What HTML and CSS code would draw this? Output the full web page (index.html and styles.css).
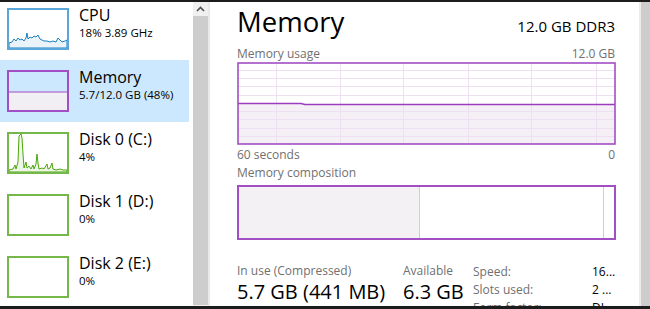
FILE: index.html
```html
<!DOCTYPE html>
<html lang="en">
<head>
    <meta charset="UTF-8">
    <title>Task Manager - Memory</title>
    <link rel="stylesheet" href="styles.css">
</head>
<body>
    <div class="frame">
        <div class="sidebar">
            <div class="list">
                <div class="item">
                    <svg class="thumb cpu" width="62" height="42" viewBox="0 0 62 42">
                        <path d="M2 35 L5 34 L7 31 L9 33 L11 30 L13 32 L15 31 L17 33 L19 30 L20 25 L21 31 L23 29 L25 30 L27 28 L29 29 L31 27 L33 31 L35 32 L37 33 L40 33 L43 34 L46 33 L49 34 L51 30 L53 32 L55 34 L58 33 L60 32 L60 40 L2 40 Z" fill="#eaf3fa" stroke="#1a7fbf" stroke-width="1"/>
                        <rect x="1" y="1" width="60" height="40" fill="none" stroke="#5aa6d9" stroke-width="2"/>
                    </svg>
                    <div class="label">
                        <div class="name">CPU</div>
                        <div class="value">18% 3.89 GHz</div>
                    </div>
                </div>
                <div class="item selected">
                    <svg class="thumb" width="62" height="42" viewBox="0 0 62 42">
                        <rect x="1" y="22" width="60" height="19" fill="#f2eff4"/>
                        <line x1="1" y1="22" x2="61" y2="22" stroke="#a24ec4" stroke-width="1.2"/>
                        <rect x="1" y="1" width="60" height="40" fill="none" stroke="#a24ec4" stroke-width="2"/>
                    </svg>
                    <div class="label">
                        <div class="name">Memory</div>
                        <div class="value">5.7/12.0 GB (48%)</div>
                    </div>
                </div>
                <div class="item">
                    <svg class="thumb" width="62" height="42" viewBox="0 0 62 42">
                        <path d="M2 38 L6 37 L8 33 L9 37 L11 30 L12 4 L14 2 L15 6 L16 22 L17 36 L19 30 L20 36 L22 34 L24 37 L26 33 L27 37 L29 32 L30 22 L31 31 L32 37 L35 36 L37 37 L40 32 L41 37 L43 36 L45 31 L46 37 L49 38 L53 37 L56 38 L60 38 L60 40 L2 40 Z" fill="#eef6e8" stroke="#4da60c" stroke-width="1"/>
                        <rect x="1" y="1" width="60" height="40" fill="none" stroke="#74b84a" stroke-width="2"/>
                    </svg>
                    <div class="label">
                        <div class="name">Disk 0 (C:)</div>
                        <div class="value">4%</div>
                    </div>
                </div>
                <div class="item">
                    <svg class="thumb" width="62" height="42" viewBox="0 0 62 42">
                        <rect x="1" y="1" width="60" height="40" fill="none" stroke="#74b84a" stroke-width="2"/>
                    </svg>
                    <div class="label">
                        <div class="name">Disk 1 (D:)</div>
                        <div class="value">0%</div>
                    </div>
                </div>
                <div class="item">
                    <svg class="thumb" width="62" height="42" viewBox="0 0 62 42">
                        <rect x="1" y="1" width="60" height="40" fill="none" stroke="#74b84a" stroke-width="2"/>
                    </svg>
                    <div class="label">
                        <div class="name">Disk 2 (E:)</div>
                        <div class="value">0%</div>
                    </div>
                </div>
            </div>
        </div>
        <div class="scrollbar">
            <div class="arrow">
                <svg width="9" height="6" viewBox="0 0 9 6"><path d="M1 5 L4.5 1.5 L8 5" fill="none" stroke="#505050" stroke-width="1.6"/></svg>
            </div>
            <div class="track"></div>
        </div>
        <div class="splitter"></div>

        <div class="main">
            <div class="header">
                <div class="title">Memory</div>
                <div class="spec">12.0 GB DDR3</div>
            </div>

            <div class="caption">
                <span>Memory usage</span>
                <span>12.0 GB</span>
            </div>
            <svg class="graph" width="379" height="83" viewBox="0 0 379 83">
                <rect x="1" y="42" width="377" height="40" fill="#f4f0f5"/>
                <g stroke="#eee0f3" stroke-width="1">
                    <line x1="1" y1="8.5" x2="378" y2="8.5"/>
                    <line x1="1" y1="16.5" x2="378" y2="16.5"/>
                    <line x1="1" y1="24.5" x2="378" y2="24.5"/>
                    <line x1="1" y1="33.5" x2="378" y2="33.5"/>
                    <line x1="1" y1="49.5" x2="378" y2="49.5"/>
                    <line x1="1" y1="57.5" x2="378" y2="57.5"/>
                    <line x1="1" y1="66.5" x2="378" y2="66.5"/>
                    <line x1="1" y1="74.5" x2="378" y2="74.5"/>
                    <line x1="39.5" y1="1" x2="39.5" y2="82"/>
                    <line x1="103.5" y1="1" x2="103.5" y2="82"/>
                    <line x1="166.5" y1="1" x2="166.5" y2="82"/>
                    <line x1="231.5" y1="1" x2="231.5" y2="82"/>
                    <line x1="294.5" y1="1" x2="294.5" y2="82"/>
                    <line x1="359.5" y1="1" x2="359.5" y2="82"/>
                </g>
                <path d="M1 41.5 L64 41.5 L68 42.5 L378 42.5" fill="none" stroke="#9a3cbf" stroke-width="1.3"/>
                <rect x="1" y="1" width="377" height="81" fill="none" stroke="#a24ec4" stroke-width="1.6"/>
            </svg>
            <div class="caption axis">
                <span>60 seconds</span>
                <span>0</span>
            </div>

            <div class="caption section">
                <span>Memory composition</span>
            </div>
            <div class="composition">
                <div class="seg inuse" style="width: 180px"></div>
                <div class="seg standby" style="width: 183px"></div>
                <div class="seg free"></div>
            </div>

            <div class="stats">
                <div class="stat">
                    <div class="stat-label">In use (Compressed)</div>
                    <div class="stat-value">5.7 GB (441 MB)</div>
                </div>
                <div class="stat">
                    <div class="stat-label">Available</div>
                    <div class="stat-value">6.3 GB</div>
                </div>
                <div class="props">
                    <span class="key">Speed:</span><span class="val">16...</span>
                    <span class="key">Slots used:</span><span class="val">2 ...</span>
                    <span class="key">Form factor:</span><span class="val">DI...</span>
                </div>
            </div>
        </div>

        <div class="rscroll"></div>
    </div>
</body>
</html>
```

FILE: styles.css
```css
html, body {
    margin: 0;
    padding: 0;
}
body {
    width: 650px;
    height: 309px;
    overflow: hidden;
    background-color: #fff;
    font-family: "Open Sans", "Noto Sans", sans-serif;
    color: #000;
}
.frame {
    box-sizing: border-box;
    height: 309px;
    border-top: 2px solid #1c1c1c;
    border-bottom: 3px solid #1c1c1c;
    display: flex;
    overflow: hidden;
}

/* left list */
.sidebar {
    width: 193px;
    flex: none;
    overflow: hidden;
}
.list {
    margin-top: -4px;
}
.item {
    width: 189px;
    height: 62px;
    box-sizing: border-box;
    padding: 10px 0 0 7px;
    display: flex;
    align-items: flex-start;
    gap: 10px;
}
.item.selected {
    background-color: #cce8ff;
}
.thumb {
    display: block;
    flex: none;
}
.label {
    margin-top: -3px;
}
.name {
    font-size: 16px;
    line-height: 20px;
}
.value {
    font-size: 11.5px;
    line-height: 16px;
}

.scrollbar {
    width: 15px;
    flex: none;
    display: flex;
    flex-direction: column;
    background-color: #f0f0f0;
}
.arrow {
    height: 14px;
    display: flex;
    align-items: center;
    justify-content: center;
}
.track {
    flex: 1;
    background-color: #cdcdcd;
    margin-bottom: 1px;
}
.splitter {
    width: 2px;
    flex: none;
    background-color: #e9e9e9;
}

/* main pane */
.main {
    flex: 1;
    padding: 0 24px 0 27px;
    min-width: 0;
}
.header {
    display: flex;
    justify-content: space-between;
    align-items: baseline;
    height: 44px;
}
.title {
    font-size: 27.5px;
    line-height: 40px;
}
.spec {
    font-size: 15px;
}
.caption {
    display: flex;
    justify-content: space-between;
    font-size: 12px;
    line-height: 16px;
    color: #707070;
}
.graph {
    display: block;
}
.axis {
    margin-top: 2px;
}
.section {
    margin-top: 2px;
}
.composition {
    box-sizing: border-box;
    width: 379px;
    height: 55px;
    margin-top: 4px;
    border: 2px solid #a24ec4;
    display: flex;
}
.seg {
    height: 100%;
}
.inuse {
    background-color: #f3f1f4;
    border-right: 1px solid #dcc4e6;
}
.standby {
    border-right: 1px solid #dcc4e6;
}
.free {
    flex: 1;
}

.stats {
    display: flex;
    margin-top: 23px;
}
.stat {
    flex: none;
}
.stat:first-child {
    width: 166px;
}
.stat:nth-child(2) {
    width: 70px;
}
.stat-label {
    font-size: 12px;
    line-height: 16px;
    color: #707070;
}
.stat-value {
    font-size: 20px;
    line-height: 26px;
    white-space: nowrap;
}
.props {
    display: grid;
    grid-template-columns: 119px auto;
    font-size: 12px;
    line-height: 18px;
}
.key {
    color: #707070;
}

.rscroll {
    width: 11px;
    flex: none;
    border-left: 2px solid #ececec;
    box-sizing: border-box;
    background-color: #cdcdcd;
}
```
